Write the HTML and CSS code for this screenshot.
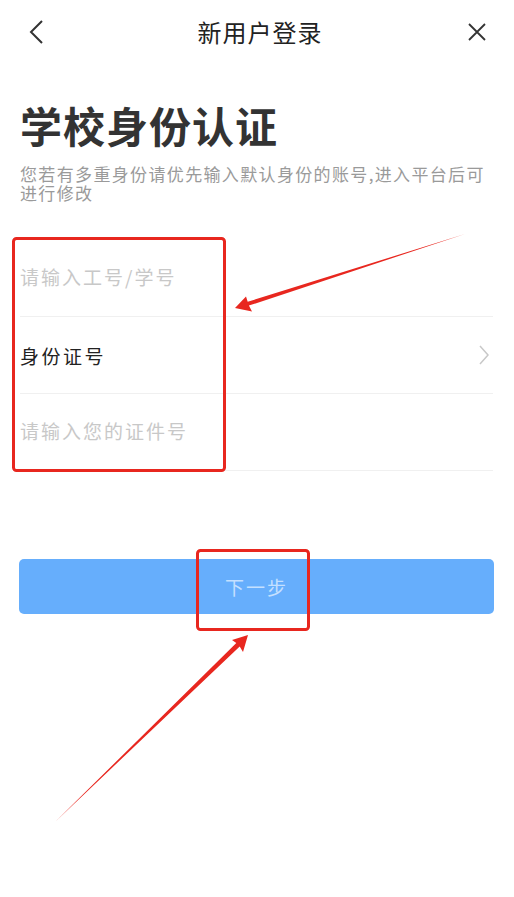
FILE: index.html
```html
<!DOCTYPE html>
<html lang="zh-CN">
<head>
    <meta charset="utf-8">
    <title>新用户登录</title>
    <link rel="stylesheet" href="styles.css">
</head>
<body>
<div class="page">
    <!-- header -->
    <div class="topbar">
        <span class="topbar-btn">
            <svg width="20" height="26" viewBox="0 0 20 26"><path d="M15 2 L4 13 L15 24" fill="none" stroke="#333" stroke-width="2"/></svg>
        </span>
        <div class="topbar-title">新用户登录</div>
        <span class="topbar-btn">
            <svg width="20" height="20" viewBox="0 0 20 20"><path d="M2 2 L18 18 M18 2 L2 18" fill="none" stroke="#333" stroke-width="1.8"/></svg>
        </span>
    </div>

    <div class="m-auth">
        <h1 class="hd">学校身份认证</h1>
        <p class="desc">您若有多重身份请优先输入默认身份的账号,进入平台后可进行修改</p>

        <div class="formlist">
            <div class="formline">
                <input type="text" class="input" placeholder="请输入工号/学号">
            </div>
            <div class="formline">
                <span class="label">身份证号</span>
                <svg class="arrow" width="12" height="20" viewBox="0 0 12 20"><path d="M2 1 L10 10 L2 19" fill="none" stroke="#c8c8c8" stroke-width="1.5"/></svg>
            </div>
            <div class="formline">
                <input type="text" class="input" placeholder="请输入您的证件号">
            </div>
        </div>

        <button type="button" class="btn-next">下一步</button>
    </div>

    <!-- 标注 -->
    <svg class="marks" width="514" height="897" viewBox="0 0 514 897">
        <rect x="13.5" y="238.5" width="211" height="232" rx="3" fill="none" stroke="#e8271f" stroke-width="3"/>
        <rect x="197.5" y="550.5" width="111" height="79" rx="3" fill="none" stroke="#e8271f" stroke-width="3"/>
        <polygon points="465,234 247.7,301.8 246,296.5 235,308 252,311.5 248.9,305.6" fill="#e8271f"/>
        <polygon points="55,822 236.3,642.9 232,640 248,635 243,652 239.7,646.5" fill="#e8271f"/>
    </svg>
</div>
</body>
</html>
```
FILE: styles.css
```css
html,body{margin:0;padding:0;background:#fff;}
body{font-family:"Noto Sans CJK SC","Noto Sans",sans-serif;color:#222;}
.page{position:relative;width:514px;min-height:897px;overflow:hidden;}

.topbar{display:flex;align-items:center;justify-content:space-between;height:64px;padding:0 24px 0 24px;}
.topbar-btn{display:flex;align-items:center;justify-content:center;width:26px;height:26px;}
.topbar-title{font-size:24px;letter-spacing:1px;color:#222;line-height:64px;padding-left:6px;}

.m-auth{padding:0 21px 0 20px;}
.m-auth .hd{margin:36px 0 0 0;font-size:42px;line-height:50px;font-weight:bold;color:#333;letter-spacing:1px;}
.m-auth .desc{margin:15px 0 0 0;font-size:17px;line-height:18.5px;color:#9a9a9a;letter-spacing:1.35px;}

.formlist{margin-top:38px;}
.formline{display:flex;align-items:center;height:76px;border-bottom:1px solid #f0f0f0;}
.formline .input{flex:1;border:0;outline:0;padding:0;margin-top:-3px;font-family:inherit;font-size:19px;letter-spacing:2px;color:#222;background:transparent;}
.formline .input::placeholder{color:#c8c8c8;}
.formline .label{flex:1;font-size:19px;letter-spacing:2.5px;color:#222;}
.formline .arrow{margin-right:3px;}

.btn-next{display:block;width:475px;height:55px;margin:88px 0 0 -1px;border:0;border-radius:5px;background:#66aefc;color:#c4e0ff;font-family:inherit;font-size:19px;letter-spacing:2px;}

.marks{position:absolute;left:0;top:0;pointer-events:none;}
```
